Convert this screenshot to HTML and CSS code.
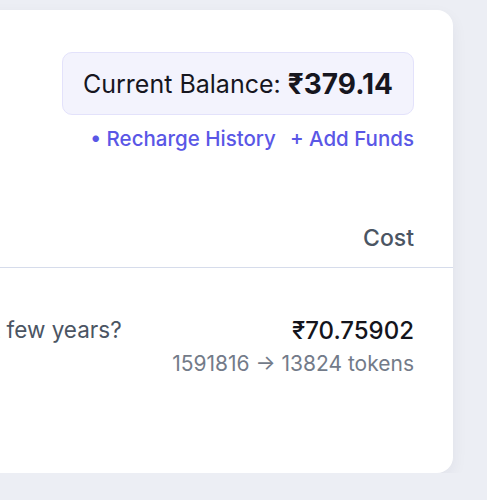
FILE: index.html
```html
<!DOCTYPE html>
<html lang="en">
<head>
    <meta charset="UTF-8">
    <meta name="viewport" content="width=device-width, initial-scale=1.0">
    <title>Usage</title>
    <link rel="stylesheet" href="styles.css">
</head>
<body>
    <div class="card">
        <div class="wallet">
            <div class="balance">Current Balance: <strong>₹379.14</strong></div>
            <div class="links">
                <a href="#">• Recharge History</a>
                <a href="#">+ Add Funds</a>
            </div>
        </div>

        <div class="usage">
            <div class="head">
                <span class="col-query">Query</span>
                <span class="col-cost">Cost</span>
            </div>
            <div class="entry">
                <span class="col-query question">How has AI changed in the last few years?</span>
                <div class="col-cost">
                    <div class="amount">₹70.75902</div>
                    <div class="tokens">1591816 → 13824 tokens</div>
                </div>
            </div>
        </div>
    </div>
</body>
</html>
```

FILE: styles.css
```css
body {
    margin: 0;
    background: #eceef4;
    font-family: Inter, "Noto Sans", sans-serif;
    overflow: hidden;
}
.card {
    background: white;
    margin: 10px 34px 0 -368px;
    border-radius: 0 16px 16px 0;
    height: 463px;
    box-shadow: 0 6px 16px rgba(30, 40, 70, 0.06);
    overflow: hidden;
}
.wallet {
    display: flex;
    flex-direction: column;
    align-items: flex-end;
    padding: 42px 39px 0 0;
}
.balance {
    background: #f3f3fd;
    border: 1px solid #e3e2fb;
    border-radius: 10px;
    height: 61px;
    padding: 0 20px;
    display: flex;
    align-items: center;
    gap: 7px;
    font-size: 25px;
    color: #16161f;
}
.balance strong {
    font-size: 28px;
    font-weight: 700;
}
.links {
    display: flex;
    gap: 14px;
    margin-top: 11px;
}
.links a {
    color: #5a57e6;
    text-decoration: none;
    font-size: 20.5px;
    font-weight: 500;
}
.usage {
    margin-top: 73px;
}
.head {
    display: flex;
    justify-content: space-between;
    padding: 0 39px 15px 40px;
    border-bottom: 1px solid #d6dceb;
    font-size: 23px;
    font-weight: 500;
    color: #4b5563;
}
.head .col-query {
    visibility: hidden;
}
.entry {
    display: flex;
    justify-content: space-between;
    align-items: flex-start;
    padding: 48px 39px 0 40px;
}
.question {
    font-size: 22.5px;
    color: #4b5563;
    white-space: nowrap;
}
.entry .col-cost {
    text-align: right;
}
.amount {
    font-size: 24px;
    font-weight: 500;
    color: #14141c;
}
.tokens {
    margin-top: 6px;
    font-size: 21px;
    color: #737b89;
}
```
